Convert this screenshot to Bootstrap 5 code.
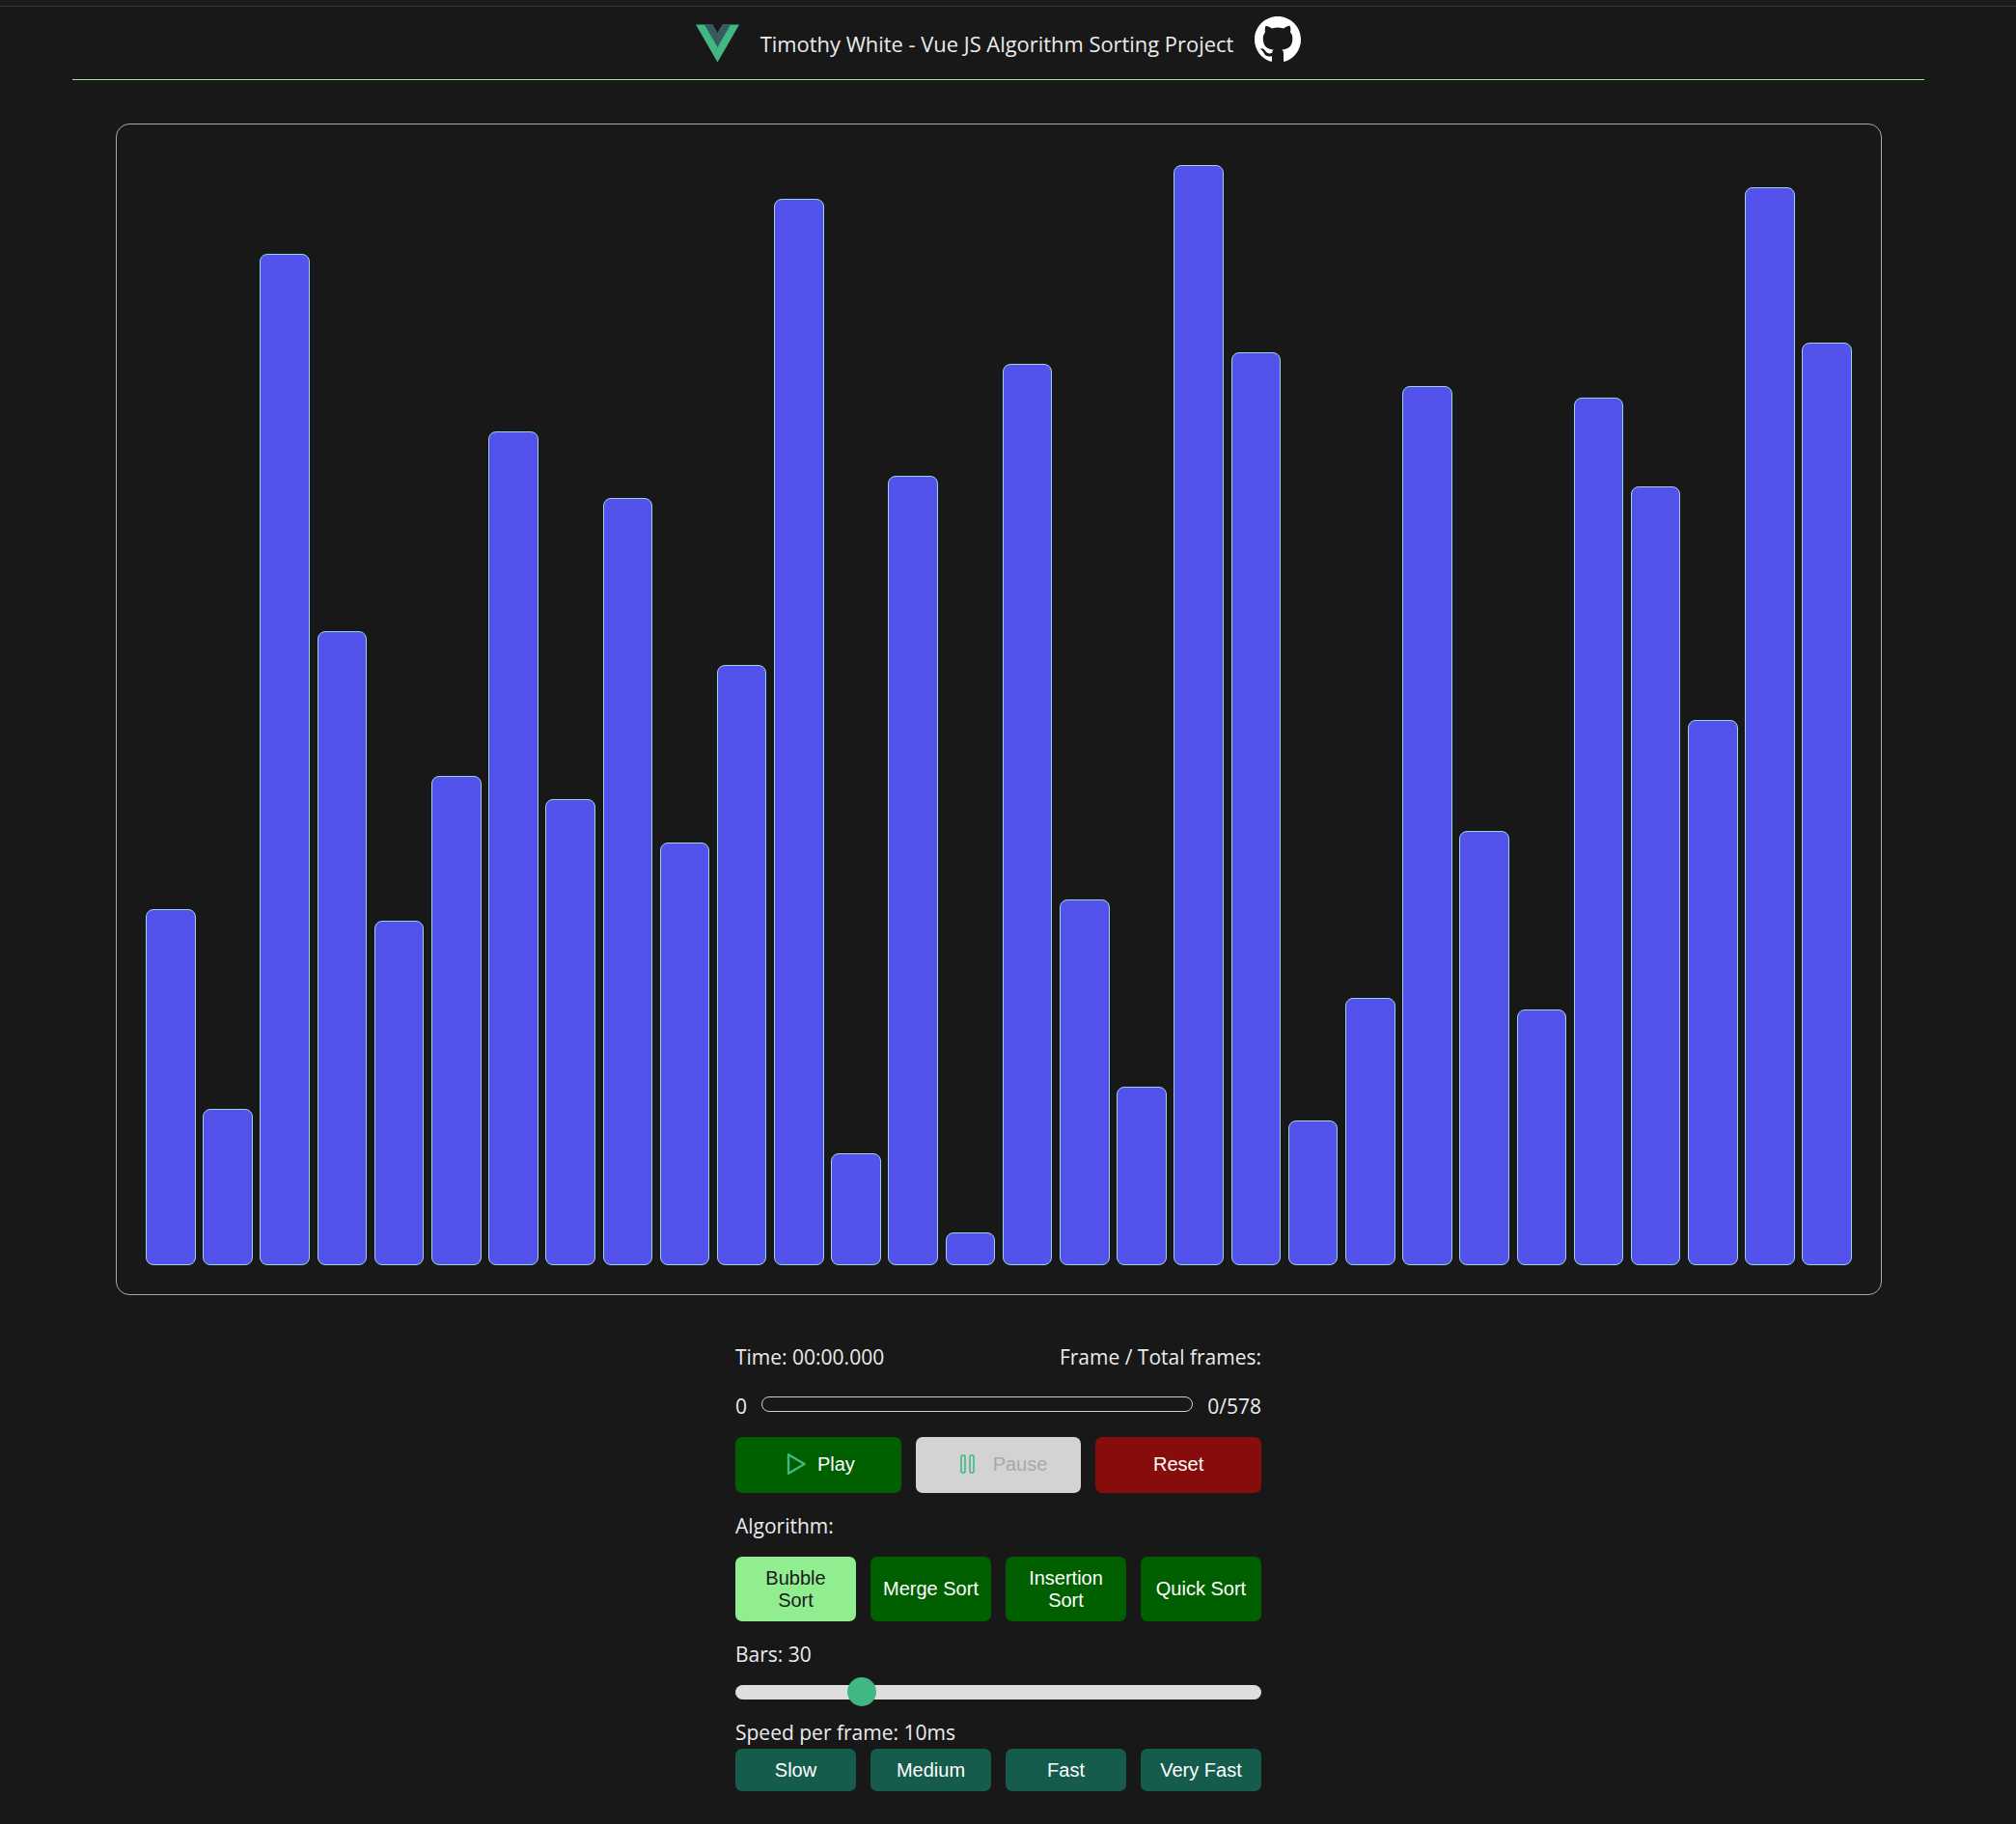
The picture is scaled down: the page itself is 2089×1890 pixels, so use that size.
<!DOCTYPE html>
<html lang="en">
<head>
<meta charset="utf-8">
<title>Vue JS Algorithm Sorting Project</title>
<link href="https://cdn.jsdelivr.net/npm/bootstrap@5.3.0/dist/css/bootstrap.min.css" rel="stylesheet">
<style>
html, body { background: #181818; }
body { color: #ebebeb; font-family: "Open Sans", "Noto Sans", sans-serif; font-size: 21px; line-height: 28px; height: 1890px; overflow: hidden; }
.top-strip { height: 7px; border-bottom: 1.5px solid #333; background: #1c1c1c; }
.page-wrap { margin-right: 20px; }
.site-head { margin: 0 75px; height: 76px; border-bottom: 1.5px solid #90ee90; }
.vue-logo { width: 45px; height: 40px; margin-top: 1px; }
.head-title { margin: 3px 22px 0 22px; color: #ebebeb; font-size: 21.9px; }
.git-logo { width: 48px; height: 48px; margin-top: -8px; }
.chart-box { margin: 45px 119px 0 120px; height: 1214px; padding: 30px; border: 1.5px solid #a9a9a9; border-radius: 14px; }
.bars-row { height: 100%; gap: 7.6px; }
.sort-bar { flex: 1 1 0; background: #5353ec; border: 1.5px solid #9ad4e4; border-radius: 8px; }
.ctl-panel { width: 545px; margin: 50px auto 0; }
.mt-row2 { margin-top: 23px; }
.seek-track { flex: 1 1 auto; height: 16px; margin: 0 15px 4px; background: transparent; border: 1.5px solid #cfcfcf; border-radius: 8px; }
.ctl-btn { flex: 1 1 0; min-width: 0; padding: 0 12px; color: #fff; font-family: "Liberation Sans", Arial, sans-serif; font-size: 20px; line-height: 23px; border: 0; border-radius: 7px; }
.btn-row { gap: 15px; }
.play-row { margin-top: 18px; height: 58px; }
.play-row .ctl-btn { padding-bottom: 2px; }
.algo-row { margin-top: 18px; height: 67px; }
.speed-row { margin-top: 3px; height: 44px; }
.green-btn, .green-btn:hover { background: #006000; color: #fff; }
.red-btn, .red-btn:hover { background: #870c0c; color: #fff; }
.active-btn, .active-btn:hover { background: #90ee90; color: #1a1a1a; }
.idle-btn, .idle-btn:disabled { background: #d3d3d3; color: #a9a9a9; opacity: 1; }
.teal-btn, .teal-btn:hover { background: #155c4c; color: #fff; }
.ico-play { width: 20px; height: 24px; margin-left: 5px; margin-right: 12px; }
.ico-pause { width: 15px; height: 20px; margin-left: 11px; margin-right: 19px; }
.mt-label-a { margin-top: 20px; }
.mt-label-b { margin-top: 20px; }
.mt-label-c { margin-top: 13px; }
.bars-range { display: block; height: 30px; margin-top: 10px; }
.bars-range::-webkit-slider-runnable-track { height: 15px; background: #dedede; border-radius: 8px; }
.bars-range::-webkit-slider-thumb { width: 30px; height: 30px; margin-top: -7.5px; background: #41b883; border-radius: 50%; }
</style>
</head>
<body>
<div class="top-strip"></div>
<div class="page-wrap">
  <header class="site-head d-flex justify-content-center align-items-center">
    <svg class="vue-logo" viewBox="0 0 261.76 226.69" aria-label="Vue logo">
      <path fill="#41b883" d="M161.096.001l-30.225 52.351L100.647.001H-.005l130.877 226.688L261.749.001z"/>
      <path fill="#365a60" d="M161.096.001l-30.225 52.351L100.647.001H52.346l78.526 136.01L209.398.001z"/>
    </svg>
    <span class="head-title">Timothy White - Vue JS Algorithm Sorting Project</span>
    <svg class="git-logo" viewBox="0 0 16 16" aria-label="GitHub logo">
      <path fill="#fff" d="M8 0C3.58 0 0 3.58 0 8c0 3.54 2.29 6.53 5.47 7.59.4.07.55-.17.55-.38 0-.19-.01-.82-.01-1.49-2.01.37-2.53-.49-2.69-.94-.09-.23-.48-.94-.82-1.13-.28-.15-.68-.52-.01-.53.63-.01 1.08.58 1.23.82.72 1.21 1.87.87 2.33.66.07-.52.28-.87.51-1.07-1.78-.2-3.64-.89-3.64-3.95 0-.87.31-1.59.82-2.15-.08-.2-.36-1.02.08-2.12 0 0 .67-.21 2.2.82.64-.18 1.32-.27 2-.27.68 0 1.36.09 2 .27 1.53-1.04 2.2-.82 2.2-.82.44 1.1.16 1.92.08 2.12.51.56.82 1.27.82 2.15 0 3.07-1.87 3.75-3.65 3.95.29.25.54.73.54 1.48 0 1.07-.01 1.93-.01 2.2 0 .21.15.46.55.38A8.013 8.013 0 0016 8c0-4.42-3.58-8-8-8z"/>
    </svg>
  </header>

  <main>
    <section class="chart-box">
      <div class="bars-row d-flex align-items-end" id="bars"></div>
    </section>

    <section class="ctl-panel">
      <div class="d-flex justify-content-between">
        <span>Time: 00:00.000</span>
        <span>Frame / Total frames:</span>
      </div>
      <div class="d-flex align-items-center mt-row2">
        <span>0</span>
        <div class="seek-track"></div>
        <span>0/578</span>
      </div>
      <div class="d-flex btn-row play-row">
        <button class="btn ctl-btn green-btn d-flex align-items-center justify-content-center" type="button">
          <svg class="ico-play" viewBox="0 0 20 24"><path d="M2 2.2 L18.6 12 L2 21.8 Z" fill="none" stroke="#41b883" stroke-width="2.4" stroke-linejoin="round"/></svg>Play
        </button>
        <button class="btn ctl-btn idle-btn d-flex align-items-center justify-content-center" type="button" disabled>
          <svg class="ico-pause" viewBox="0 0 15 20"><rect x="1" y="1" width="4" height="18" rx="1.6" fill="none" stroke="#41b883" stroke-width="1.6"/><rect x="10" y="1" width="4" height="18" rx="1.6" fill="none" stroke="#41b883" stroke-width="1.6"/></svg>Pause
        </button>
        <button class="btn ctl-btn red-btn" type="button">Reset</button>
      </div>
      <div class="mt-label-a">Algorithm:</div>
      <div class="d-flex btn-row algo-row">
        <button class="btn ctl-btn active-btn" type="button">Bubble Sort</button>
        <button class="btn ctl-btn green-btn" type="button">Merge Sort</button>
        <button class="btn ctl-btn green-btn" type="button">Insertion Sort</button>
        <button class="btn ctl-btn green-btn" type="button">Quick Sort</button>
      </div>
      <div class="mt-label-b">Bars: 30</div>
      <input class="form-range bars-range" type="range" min="10" max="99" value="30" aria-label="Bars">
      <div class="mt-label-c">Speed per frame: 10ms</div>
      <div class="d-flex btn-row speed-row">
        <button class="btn ctl-btn teal-btn" type="button">Slow</button>
        <button class="btn ctl-btn teal-btn" type="button">Medium</button>
        <button class="btn ctl-btn teal-btn" type="button">Fast</button>
        <button class="btn ctl-btn teal-btn" type="button">Very Fast</button>
      </div>
    </section>
  </main>
</div>
<script>
  var tops = [708,863,198,492,717,604,336,622,388,656,518,155,898,371,959,284,700,846,129,275,872,777,301,647,786,310,379,561,146,267];
  var box = document.getElementById('bars');
  tops.forEach(function (t) {
    var d = document.createElement('div');
    d.className = 'sort-bar';
    d.style.height = ((984.8 - t) * 1.3323).toFixed(1) + 'px';
    box.appendChild(d);
  });
</script>
<script src="https://cdn.jsdelivr.net/npm/bootstrap@5.3.0/dist/js/bootstrap.bundle.min.js"></script>
</body>
</html>
